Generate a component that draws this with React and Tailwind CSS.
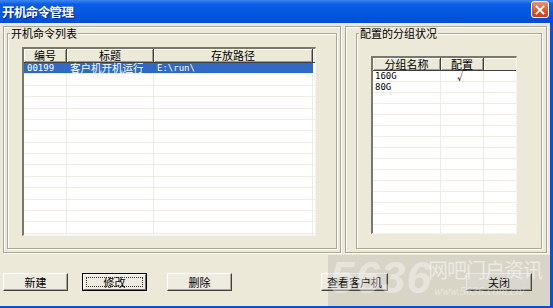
import React from "react";

const cjk = "font-['Noto_Sans_CJK_SC','Noto_Sans',sans-serif]";
const mono = "font-['DejaVu_Sans_Mono',monospace]";

const hdr =
  "h-full shrink-0 flex items-center justify-center bg-[#ECE9D8] border-r border-b border-[#404040] shadow-[inset_1px_1px_0_#fff,inset_-1px_-1px_0_#A09D90] text-[11px] leading-none text-black";

function Btn({ children, w, ml, def }) {
  if (def) {
    return (
      <div className={`h-[18px] ${w} ${ml} shrink-0 border border-black`}>
        <div className="w-full h-full bg-[#EEEBE0] border-t border-l border-white border-r border-b border-r-[#716F64] border-b-[#716F64] p-[2px]">
          <div className="w-full h-full border border-dotted border-[#333] flex items-center justify-center text-[11px] leading-none text-black">
            {children}
          </div>
        </div>
      </div>
    );
  }
  return (
    <div
      className={`h-[18px] ${w} ${ml} shrink-0 bg-[#EEEBE0] border-t border-l border-white border-r border-b border-r-[#404040] border-b-[#404040] shadow-[inset_-1px_-1px_0_#ACA899] flex items-center justify-center text-[11px] leading-none text-black whitespace-nowrap`}
    >
      {children}
    </div>
  );
}

function GroupLabel({ children }) {
  return (
    <span className="absolute left-[2px] top-[-7px] bg-[#ECE9D8] px-[1px] text-[11px] leading-[12px] text-black whitespace-nowrap">
      {children}
    </span>
  );
}

const leftRows = Array.from({ length: 16 }, (_, i) => i);
const rightRows = Array.from({ length: 16 }, (_, i) => i);

export default function App() {
  return (
    <div className={`relative w-[553px] h-[308px] overflow-hidden bg-[#0B4FD4] flex flex-col ${cjk}`}>
      {/* title bar */}
      <div className="h-[23px] shrink-0 flex items-start justify-between pl-[2px] pr-[4px] bg-[linear-gradient(180deg,#3F87F2_0%,#0B5DE4_18%,#0556E0_60%,#034BD2_100%)]">
        <span className="mt-[4px] text-white font-bold text-[12.5px] leading-[15px] tracking-[-0.6px] [text-shadow:1px_1px_0_#0A2C8C]">
          开机命令管理
        </span>
        <div className="mt-[1px] w-[18px] h-[17px] rounded-[3px] border border-white bg-[linear-gradient(180deg,#EC9272_0%,#DA5A33_55%,#C8401B_100%)] flex items-center justify-center">
          <svg width="10" height="10" viewBox="0 0 10 10">
            <path d="M1.5 1.5 L8.5 8.5 M8.5 1.5 L1.5 8.5" stroke="#fff" strokeWidth="1.8" strokeLinecap="square" />
          </svg>
        </div>
      </div>

      {/* body */}
      <div className="w-[550px] h-[283px] bg-[#ECE9D8] flex flex-col">
        <div className="mt-[3px] h-[227px] flex pl-[3px] gap-[4px]">
          {/* left panel */}
          <div className="w-[338px] h-full border border-[#ACA899] shadow-[inset_1px_1px_0_#fff,1px_1px_0_#fff] pt-[6px] pl-[3px] pr-[3px] pb-[3px]">
            <div className="relative w-full h-full border border-[#ACA899] shadow-[inset_1px_1px_0_#fff,1px_1px_0_#fff] pl-[14px] pt-[13px]">
              <GroupLabel>开机命令列表</GroupLabel>
              <div className="w-[294px] h-[189px] bg-white border-t-2 border-l-2 border-[#7A7869] border-r border-b border-r-[#F5F4EE] border-b-[#F5F4EE] overflow-hidden flex flex-col">
                <div className="h-[14px] shrink-0 flex">
                  <div className={`${hdr} w-[43px]`}>编号</div>
                  <div className={`${hdr} w-[87px]`}>标题</div>
                  <div className={`${hdr} w-[159px]`}>存放路径</div>
                  <div className="h-full flex-1 bg-[#ECE9D8] border-b border-[#404040] shadow-[inset_1px_1px_0_#fff]" />
                </div>
                {leftRows.map((i) => {
                  const sel = i === 0;
                  const cell = sel
                    ? "bg-[#316AC5] text-white border-r border-[#316AC5]"
                    : "border-r border-[#EEEBE0]";
                  return (
                    <div key={i} className="h-[11.375px] shrink-0 flex border-b border-[#EEEBE0]">
                      <div className={`w-[43px] h-full shrink-0 ${cell} flex items-center pl-[3px] ${mono} text-[9px] leading-none`}>
                        {sel ? "00199" : ""}
                      </div>
                      <div className={`w-[87px] h-full shrink-0 ${cell} flex items-center pl-[3px] text-[10.5px] leading-none whitespace-nowrap`}>
                        {sel ? "客户机开机运行" : ""}
                      </div>
                      <div className={`w-[159px] h-full shrink-0 ${cell} flex items-center pl-[3px] ${mono} text-[9px] leading-none`}>
                        {sel ? "E:\\run\\" : ""}
                      </div>
                      <div className="flex-1 h-full" />
                    </div>
                  );
                })}
              </div>
            </div>
          </div>

          {/* right panel */}
          <div className="w-[202px] h-full border border-[#ACA899] shadow-[inset_1px_1px_0_#fff,1px_1px_0_#fff] pt-[6px] pl-[10px] pr-[4px] pb-[3px]">
            <div className="relative w-full h-full border border-[#ACA899] shadow-[inset_1px_1px_0_#fff,1px_1px_0_#fff] pl-[14px] pt-[22px]">
              <GroupLabel>配置的分组状况</GroupLabel>
              <div className="w-[146px] h-[178px] bg-white border-t-2 border-l-2 border-[#7A7869] border-r border-b border-r-[#F5F4EE] border-b-[#F5F4EE] overflow-hidden flex flex-col">
                <div className="h-[13px] shrink-0 flex">
                  <div className={`${hdr} w-[68px]`}>分组名称</div>
                  <div className={`${hdr} w-[43px]`}>配置</div>
                  <div className="h-full flex-1 bg-[#ECE9D8] border-b border-[#404040] shadow-[inset_1px_1px_0_#fff]" />
                </div>
                {rightRows.map((i) => {
                  const name = i === 0 ? "160G" : i === 1 ? "80G" : "";
                  const chk = i === 0 ? "√" : "";
                  return (
                    <div key={i} className="h-[11px] shrink-0 flex border-b border-[#EEEBE0]">
                      <div className={`w-[68px] h-full shrink-0 border-r border-[#EEEBE0] flex items-center pl-[2px] ${mono} text-[9px] leading-none text-black`}>
                        {name}
                      </div>
                      <div className="w-[43px] h-full shrink-0 border-r border-[#EEEBE0] flex items-center justify-center text-[10px] leading-none text-black">
                        {chk}
                      </div>
                      <div className="flex-1 h-full" />
                    </div>
                  );
                })}
              </div>
            </div>
          </div>
        </div>

        {/* buttons */}
        <div className="mt-[20px] h-[18px] flex">
          <Btn w="w-[65px]" ml="ml-[3px]">新建</Btn>
          <Btn w="w-[65px]" ml="ml-[14px]" def>修改</Btn>
          <Btn w="w-[65px]" ml="ml-[20px]">删除</Btn>
          <Btn w="w-[67px]" ml="ml-[89px]">查看客户机</Btn>
          <Btn w="w-[66px]" ml="ml-[78px]">关闭</Btn>
        </div>
      </div>

      {/* watermark overlay */}
      <div className="absolute left-[328px] top-[255px] w-[222px] h-[51px] bg-[rgba(110,110,110,0.16)] pointer-events-none overflow-hidden">
        <span className="absolute left-[2px] top-[-2px] font-['Liberation_Sans',sans-serif] italic font-bold text-[44px] leading-[50px] text-[rgba(255,255,255,0.4)] tracking-[1px] whitespace-nowrap">
          5636
        </span>
        <span className="absolute left-[100px] top-[4px] text-[20px] leading-[22px] text-[rgba(255,255,255,0.5)] tracking-[-1px] whitespace-nowrap">
          网吧门户资讯
        </span>
        <span className="absolute left-[106px] top-[29px] font-['Liberation_Serif',serif] italic text-[12px] leading-[14px] text-[rgba(255,255,255,0.45)] whitespace-nowrap">
          www.5636.com.cn/
        </span>
      </div>
    </div>
  );
}
